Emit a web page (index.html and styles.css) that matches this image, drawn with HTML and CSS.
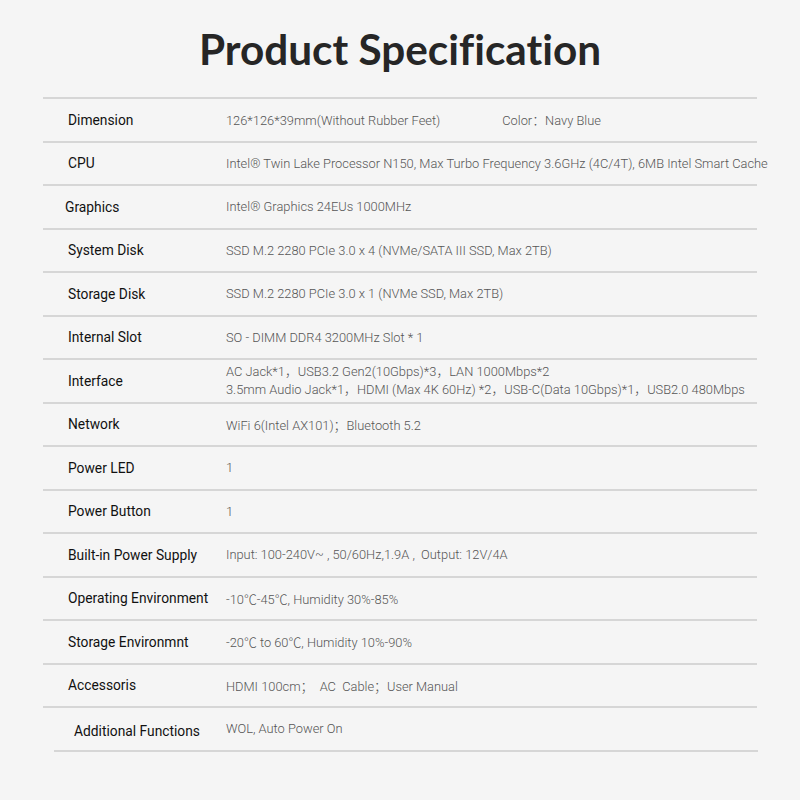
FILE: index.html
```html
<!DOCTYPE html>
<html lang="en">
<head>
<meta charset="utf-8">
<title>Product Specification</title>
<link rel="stylesheet" href="styles.css">
</head>
<body>
<main class="page">
  <h1 class="title">Product Specification</h1>
  <div class="spec">
    <div class="row"><div class="label">Dimension</div><div class="value">126*126*39mm(Without Rubber Feet)<span class="color">Color：<span class="color-val">Navy Blue</span></span></div></div>
    <div class="row"><div class="label">CPU</div><div class="value">Intel® Twin Lake Processor N150, Max Turbo Frequency 3.6GHz (4C/4T), 6MB Intel Smart Cache</div></div>
    <div class="row"><div class="label shift-l">Graphics</div><div class="value">Intel® Graphics 24EUs 1000MHz</div></div>
    <div class="row"><div class="label">System Disk</div><div class="value">SSD M.2 2280 PCIe 3.0 x 4 (NVMe/SATA III SSD, Max 2TB)</div></div>
    <div class="row"><div class="label">Storage Disk</div><div class="value">SSD M.2 2280 PCIe 3.0 x 1 (NVMe SSD, Max 2TB)</div></div>
    <div class="row"><div class="label">Internal Slot</div><div class="value">SO - DIMM DDR4 3200MHz Slot * 1</div></div>
    <div class="row"><div class="label">Interface</div><div class="value multi"><span>AC Jack*1，USB3.2 Gen2(10Gbps)*3，LAN 1000Mbps*2</span><span>3.5mm Audio Jack*1，HDMI (Max 4K 60Hz) *2，USB-C(Data 10Gbps)*1，USB2.0 480Mbps</span></div></div>
    <div class="row"><div class="label">Network</div><div class="value">WiFi 6(Intel AX101)；Bluetooth 5.2</div></div>
    <div class="row"><div class="label">Power LED</div><div class="value">1</div></div>
    <div class="row"><div class="label">Power Button</div><div class="value">1</div></div>
    <div class="row"><div class="label">Built-in Power Supply</div><div class="value">Input: 100-240V~ , 50/60Hz,1.9A ,  Output: 12V/4A</div></div>
    <div class="row"><div class="label">Operating Environment</div><div class="value">-10℃-45℃, Humidity 30%-85%</div></div>
    <div class="row"><div class="label">Storage Environmnt</div><div class="value">-20℃ to 60℃, Humidity 10%-90%</div></div>
    <div class="row"><div class="label">Accessoris</div><div class="value">HDMI 100cm；  AC  Cable；User Manual</div></div>
    <div class="row last"><div class="label shift-r">Additional Functions</div><div class="value">WOL, Auto Power On</div></div>
  </div>
  <div class="end-rule"></div>
</main>
</body>
</html>
```

FILE: styles.css
```css
html, body {
  margin: 0;
  padding: 0;
  background: #f5f5f5;
}

.page {
  width: 800px;
  min-height: 800px;
  font-family: Roboto, "Noto Sans CJK SC", sans-serif;
}

.title {
  margin: 0;
  height: 97px;
  display: flex;
  align-items: center;
  justify-content: center;
  padding-bottom: 1px;
  box-sizing: border-box;
  font-family: Lato, "Liberation Sans", sans-serif;
  font-weight: 700;
  font-size: 42.3px;
  color: #262626;
  font-variant-ligatures: none;
}

.spec {
  margin-left: 43px;
  width: 714px;
  border-top: 2px solid #d6d6d6;
}

.row {
  display: grid;
  grid-template-columns: 183px 1fr;
  align-items: center;
  height: 41.5px;
  border-bottom: 2px solid #d6d6d6;
}

.row.last {
  border-bottom: none;
}

.end-rule {
  margin-left: 54px;
  width: 704px;
  height: 2px;
  background: #d6d6d6;
}

.label {
  padding-left: 25px;
  font-size: 13.8px;
  font-weight: 400;
  color: #111;
  white-space: nowrap;
}

.label.shift-l {
  padding-left: 22px;
}

.label.shift-r {
  padding-left: 31px;
  padding-top: 4px;
}

.value {
  font-size: 12.85px;
  font-weight: 300;
  color: #555;
  white-space: pre;
}

.value.multi {
  display: flex;
  flex-direction: column;
  line-height: 18px;
}

.color {
  margin-left: 62px;
}
```
